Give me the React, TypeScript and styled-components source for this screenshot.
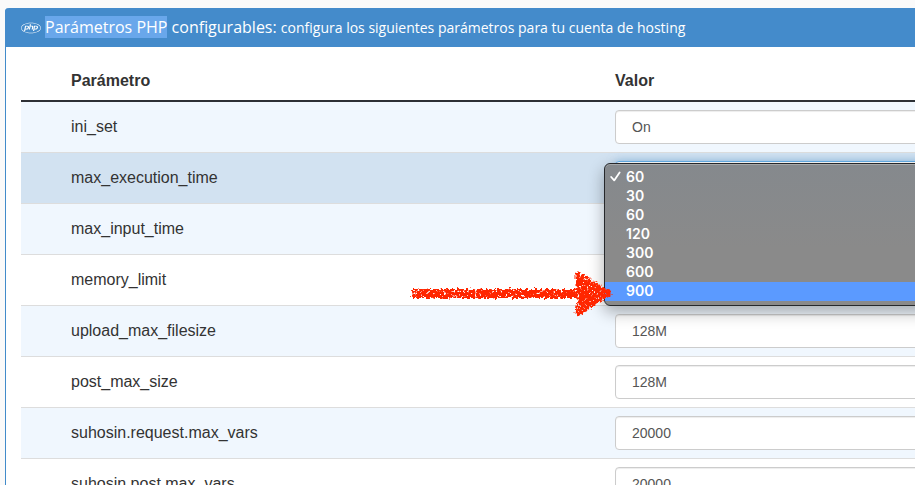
import React from "react";
import styled, { createGlobalStyle, css } from "styled-components";
import { FaPhp } from "react-icons/fa6";

const GlobalStyle = createGlobalStyle`
  * { box-sizing: border-box; }
  body {
    margin: 0;
    background: #fafafa;
    color: #333;
    font: 16px/22px "Liberation Sans", Arial, sans-serif;
    overflow: hidden;
  }
`;

const Page = styled.main`
  height: 100vh;
  overflow: hidden;
  padding: 8px 0 0 5px;
`;

const Panel = styled.section`
  width: calc(100% + 40px);
  background: #fff;
  border: 1px solid #428bca;
  border-top: 0;
  border-radius: 4px;
`;

const PanelHeader = styled.header`
  display: flex;
  align-items: center;
  gap: 4px;
  height: 39px;
  margin-left: -1px;
  padding: 0 16px;
  background: #448bcb;
  color: #fff;
  border-radius: 4px 4px 0 0;
`;

const Title = styled.h1`
  margin: 0;
  font: 500 16px/22px "Open Sans", sans-serif;
  white-space: nowrap;
`;

const Selected = styled.span`
  background: #69a7eb;
`;

const Subtitle = styled.small`
  font-size: 14px;
`;

const PanelBody = styled.div`
  padding: 15px;
`;

const Table = styled.table`
  width: 100%;
  table-layout: fixed;
  border-collapse: separate;
  border-spacing: 0;
`;

const NameCol = styled.col`
  width: 586px;
`;

const HeadCell = styled.th<{ $indent?: boolean }>`
  padding: 8px;
  padding-left: ${(p) => (p.$indent ? "50px" : "8px")};
  border-bottom: 2px solid #2d3035;
  text-align: left;
`;

const Row = styled.tr<{ $tone: "plain" | "stripe" | "active" }>`
  background: ${(p) =>
    ({ plain: "#fff", stripe: "#f0f7fe", active: "#d2e2f1" })[p.$tone]};

  &:not(:first-child) > * {
    border-top: 1px solid #ddd;
  }
`;

const NameCell = styled.th`
  padding: 8px 8px 8px 50px;
  font-weight: 400;
  text-align: left;
`;

const ValueCell = styled.td`
  position: relative;
  padding: 8px;
`;

const Select = styled.select<{ $focused?: boolean }>`
  appearance: none;
  display: block;
  width: 100%;
  height: 34px;
  padding: 6px 16px;
  border: 1px solid #ccc;
  border-radius: 4px;
  outline: 0;
  background: #fff;
  color: #555;
  font: 14px/20px "Liberation Sans", Arial, sans-serif;
  box-shadow: inset 0 1px 1px rgba(0, 0, 0, 0.075);
  ${(p) =>
    p.$focused &&
    css`
      border-color: #66afe9;
      box-shadow: 0 0 8px rgba(102, 175, 233, 0.6);
    `}
`;

const Menu = styled.ul`
  position: absolute;
  z-index: 1;
  top: 10px;
  left: -3px;
  right: 0;
  margin: 0;
  padding: 4px 0;
  list-style: none;
  border: 1px solid #26282b;
  border-radius: 6px;
  background: linear-gradient(#85898d, #8a8a8a 60%);
  box-shadow: inset 0 1px 0 #a5a8aa, 0 6px 16px rgba(0, 0, 0, 0.32);
  color: #fff;
  font: 600 14px/17px Inter, sans-serif;
`;

const Option = styled.li<{ $active?: boolean }>`
  position: relative;
  display: flex;
  align-items: center;
  height: 19px;
  padding: 0 0 2px 5px;
  background: ${(p) => (p.$active ? "#5b9aff" : "transparent")};
`;

const Tick = styled.span`
  display: flex;
  width: 16px;
`;

const Arrow = styled.svg`
  position: absolute;
  top: -13px;
  left: -199px;
  width: 208px;
  height: 50px;
  pointer-events: none;
`;

const CrayonArrow = () => (
  <Arrow viewBox="0 0 208 50" aria-hidden="true">
    <defs>
      <filter id="crayon" x="0" y="0" width="208" height="50" filterUnits="userSpaceOnUse" colorInterpolationFilters="sRGB">
        <feTurbulence type="fractalNoise" baseFrequency="0.35" numOctaves="2" seed="4" result="edge" />
        <feDisplacementMap in="SourceGraphic" in2="edge" scale="6" xChannelSelector="R" yChannelSelector="G" result="rough" />
        <feTurbulence type="fractalNoise" baseFrequency="0.42" numOctaves="2" seed="11" />
        <feColorMatrix values="0 0 0 0 0  0 0 0 0 0  0 0 0 0 0  0 0 0 8 -2.1" result="grain" />
        <feComposite in="rough" in2="grain" operator="in" />
      </filter>
    </defs>
    <g fill="#ff2600" stroke="#ff2600" strokeLinejoin="round" filter="url(#crayon)">
      <path d="M7 21 L172 21 L172 28 L7 28 L9 25 Z" strokeWidth="2" />
      <path d="M171 5 L175 5 L188 14 L203 23 L203 26 L189 34 L174 45 L171 44 L173 31 L171 22 Z" strokeWidth="3" />
    </g>
  </Arrow>
);

const settings = [
  { name: "ini_set", value: "On" },
  { name: "max_execution_time", value: "60", open: true },
  { name: "max_input_time", value: "60" },
  { name: "memory_limit", value: "128M" },
  { name: "upload_max_filesize", value: "128M" },
  { name: "post_max_size", value: "128M" },
  { name: "suhosin.request.max_vars", value: "20000" },
  { name: "suhosin.post.max_vars", value: "20000" },
];

const times = ["60", "30", "60", "120", "300", "600", "900"];

const TimeMenu = () => (
  <Menu role="listbox" aria-label="max_execution_time">
    {times.map((time, i) => (
      <Option key={i} role="option" aria-selected={i === 0} $active={time === "900"}>
        <Tick>
          {i === 0 && (
            <svg width="11" height="11" viewBox="0 0 11 11" aria-hidden="true">
              <path d="M1.2 6 L4.2 9.4 L9.6 1.4" fill="none" stroke="#fff" strokeWidth="1.8" strokeLinecap="round" strokeLinejoin="round" />
            </svg>
          )}
        </Tick>
        {time}
        {time === "900" && <CrayonArrow />}
      </Option>
    ))}
  </Menu>
);

export default function App() {
  return (
    <Page>
      <GlobalStyle />
      <Panel>
        <PanelHeader>
          <FaPhp size={20} aria-hidden="true" />
          <Title>
            <Selected>Parámetros PHP</Selected> configurables:{" "}
            <Subtitle>configura los siguientes parámetros para tu cuenta de hosting</Subtitle>
          </Title>
        </PanelHeader>
        <PanelBody>
          <Table>
            <colgroup>
              <NameCol />
              <col />
            </colgroup>
            <thead>
              <tr>
                <HeadCell scope="col" $indent>Parámetro</HeadCell>
                <HeadCell scope="col">Valor</HeadCell>
              </tr>
            </thead>
            <tbody>
              {settings.map((s, i) => (
                <Row key={s.name} $tone={s.open ? "active" : i % 2 ? "plain" : "stripe"}>
                  <NameCell scope="row">
                    <label htmlFor={s.name}>{s.name}</label>
                  </NameCell>
                  <ValueCell>
                    <Select id={s.name} defaultValue={s.value} $focused={s.open}>
                      <option>{s.value}</option>
                    </Select>
                    {s.open && <TimeMenu />}
                  </ValueCell>
                </Row>
              ))}
            </tbody>
          </Table>
        </PanelBody>
      </Panel>
    </Page>
  );
}
